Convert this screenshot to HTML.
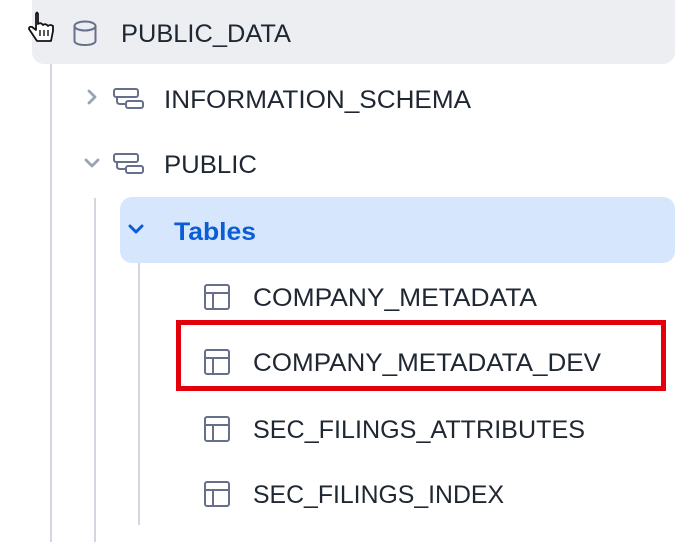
<!DOCTYPE html>
<html><head><meta charset="utf-8"><style>
html,body{margin:0;padding:0;background:#fff;width:698px;height:542px;overflow:hidden}
svg{display:block}
text{font-family:"Liberation Sans",sans-serif;font-size:25px;fill:#1f2732}
</style></head><body>
<svg width="698" height="542" viewBox="0 0 698 542" xmlns="http://www.w3.org/2000/svg">
<rect x="32" y="-10" width="643" height="74" rx="12" fill="#eceef2"/>
<rect x="120" y="197" width="555" height="66" rx="12" fill="#d6e6fd"/>
<line x1="51" y1="64" x2="51" y2="542" stroke="#d2d6df" stroke-width="2"/>
<line x1="95" y1="198" x2="95" y2="542" stroke="#d2d6df" stroke-width="2"/>
<line x1="139" y1="263" x2="139" y2="525" stroke="#d2d6df" stroke-width="2"/>
<!-- cursor -->
<path d="M36 14 l0 16 l-4 -3 q-3 -1 -3 2 l8 12 l14 0 l2 -10 l0 -5 q-3 -2 -5 0 q-2 -3 -5 -1 q-2 -3 -5 -1 l0 -10 q-1 -3 -2 0z" fill="#fff" stroke="#111" stroke-width="1.8" stroke-linejoin="round"/>
<path d="M40 30v6M44 30v6M48 30v6" stroke="#111" stroke-width="1.4"/>
<!-- database -->
<g fill="none" stroke="#66708a" stroke-width="2">
<ellipse cx="85" cy="26" rx="10.5" ry="4.5"/>
<path d="M74.5 26v15c0 2.5 4.7 4 10.5 4s10.5-1.5 10.5-4V26"/>
</g>
<text x="121" y="42" textLength="170" lengthAdjust="spacingAndGlyphs">PUBLIC_DATA</text>
<!-- chevrons -->
<path d="M89 91l6 6-6 6" fill="none" stroke="#9aa3b5" stroke-width="2.8" stroke-linecap="round" stroke-linejoin="round"/>
<path d="M86 160l6 6 6-6" fill="none" stroke="#9aa3b5" stroke-width="2.8" stroke-linecap="round" stroke-linejoin="round"/>
<g fill="none" stroke="#66708a" stroke-width="2">
<rect x="114" y="89" width="24" height="8" rx="2"/><rect x="126" y="101" width="17" height="7" rx="2"/><path d="M117 97v4q0 3 3 3h6"/>
<rect x="114" y="154" width="24" height="8" rx="2"/><rect x="126" y="166" width="17" height="7" rx="2"/><path d="M117 162v4q0 3 3 3h6"/>
</g>
<text x="164" y="108" textLength="307" lengthAdjust="spacingAndGlyphs">INFORMATION_SCHEMA</text>
<text x="164" y="173" textLength="93" lengthAdjust="spacingAndGlyphs">PUBLIC</text>
<path d="M130 226l6 6 6-6" fill="none" stroke="#0b5cd5" stroke-width="3" stroke-linecap="round" stroke-linejoin="round"/>
<text x="174" y="240" textLength="82" lengthAdjust="spacingAndGlyphs" style="fill:#0b5cd5;font-weight:bold">Tables</text>
<g fill="none" stroke="#66708a" stroke-width="2">
<g transform="translate(0,0)"><rect x="205" y="285" width="24" height="24" rx="2"/><path d="M205 293h24M213 293v16"/></g>
<g transform="translate(0,65)"><rect x="205" y="285" width="24" height="24" rx="2"/><path d="M205 293h24M213 293v16"/></g>
<g transform="translate(0,132)"><rect x="205" y="285" width="24" height="24" rx="2"/><path d="M205 293h24M213 293v16"/></g>
<g transform="translate(0,197)"><rect x="205" y="285" width="24" height="24" rx="2"/><path d="M205 293h24M213 293v16"/></g>
</g>
<text x="253" y="306" textLength="284" lengthAdjust="spacingAndGlyphs">COMPANY_METADATA</text>
<text x="253" y="371" textLength="348" lengthAdjust="spacingAndGlyphs">COMPANY_METADATA_DEV</text>
<text x="253" y="438" textLength="332" lengthAdjust="spacingAndGlyphs">SEC_FILINGS_ATTRIBUTES</text>
<text x="253" y="503" textLength="251" lengthAdjust="spacingAndGlyphs">SEC_FILINGS_INDEX</text>
<rect x="178.5" y="322.5" width="485" height="66" fill="none" stroke="#e3000b" stroke-width="5"/>
</svg>
</body></html>
